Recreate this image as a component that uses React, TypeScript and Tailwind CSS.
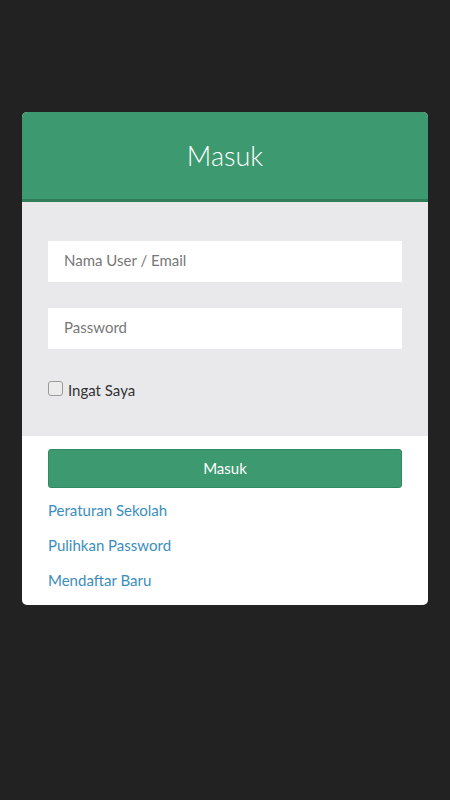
import React from "react";

export default function App() {
  return (
    <div
      className="min-h-[800px] w-full bg-[#222222] pt-[112px] px-[22px]"
      style={{ fontFamily: "Lato, 'Noto Sans', sans-serif" }}
    >
      <div className="w-[406px] overflow-hidden rounded-[5px] bg-white">
        <div className="flex h-[90px] items-center justify-center border-b-[3px] border-[#2f7d59] bg-[#3d9970] pt-[2px]">
          <h1 className="text-[27px] font-light text-white">Masuk</h1>
        </div>
        <div className="flex flex-col bg-[#e9e9eb] px-[26px] pt-[39px] pb-[34px]">
          <div className="flex h-[41px] items-center bg-white px-[16px] pb-[2px] text-[15px] text-[#777]">
            Nama User / Email
          </div>
          <div className="mt-[26px] flex h-[41px] items-center bg-white px-[16px] pb-[2px] text-[15px] text-[#777]">
            Password
          </div>
          <div className="mt-[27px] flex items-center">
            <span className="h-[15px] w-[15px] rounded-[3px] border border-[#9a9a9a] bg-[#ececec]" />
            <span className="ml-[5px] mt-[3px] text-[15px] text-[#333]">Ingat Saya</span>
          </div>
        </div>
        <div className="flex flex-col px-[26px] pt-[13px] pb-[13px]">
          <div className="flex h-[39px] items-center justify-center rounded-[3px] border border-[#308a60] bg-[#3d9970] text-[15px] text-white">
            Masuk
          </div>
          <a className="mt-[10px] text-[15px] leading-[24px] text-[#3c8dbc]">Peraturan Sekolah</a>
          <a className="mt-[11px] text-[15px] leading-[24px] text-[#3c8dbc]">Pulihkan Password</a>
          <a className="mt-[11px] text-[15px] leading-[24px] text-[#3c8dbc]">Mendaftar Baru</a>
        </div>
      </div>
    </div>
  );
}
